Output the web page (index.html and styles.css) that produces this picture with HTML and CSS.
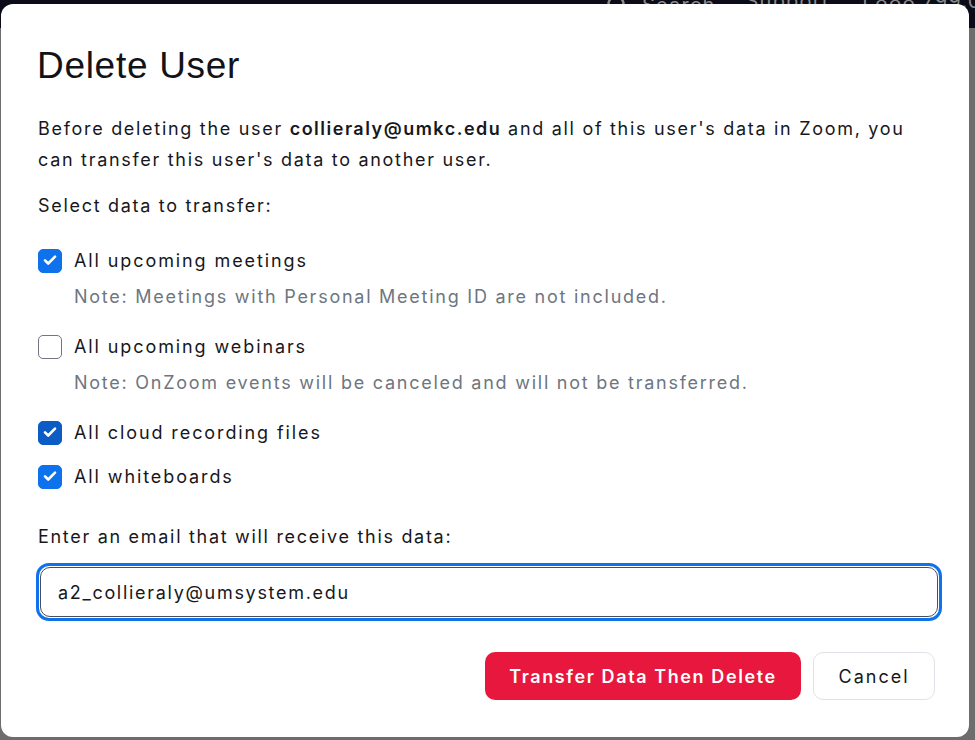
FILE: index.html
```html
<!DOCTYPE html>
<html lang="en">
<head>
<meta charset="utf-8">
<title>Delete User</title>
<link rel="stylesheet" href="styles.css">
</head>
<body>
<header class="topbar">
  <span class="top-item"><svg class="search-ic" width="22" height="22" viewBox="0 0 22 22"><circle cx="10" cy="10" r="7.5" fill="none" stroke="#8a8a8a" stroke-width="2.5"/><path d="M15.5 15.5l5 5" stroke="#8a8a8a" stroke-width="2.5"/></svg>Search</span>
  <span class="top-item">Support</span>
  <span class="top-item">1.888.799.0125</span>
</header>
<main class="page"></main>

<div class="modal" role="dialog" aria-labelledby="dlg-title">
  <h1 id="dlg-title" class="modal-title">Delete User</h1>
  <p class="intro">Before deleting the user <b>collieraly@umkc.edu</b> and all of this user's data in Zoom, you can transfer this user's data to another user.</p>
  <p class="label">Select data to transfer:</p>

  <div class="options">
    <div class="option">
      <label class="check-row"><span class="box checked"><svg viewBox="0 0 24 24" width="24" height="24"><path d="M7 12.3l3.2 3.2L17 8.7" fill="none" stroke="#fff" stroke-width="2.6" stroke-linecap="round" stroke-linejoin="round"/></svg></span>All upcoming meetings</label>
      <div class="note">Note: Meetings with Personal Meeting ID are not included.</div>
    </div>
    <div class="option">
      <label class="check-row"><span class="box"></span>All upcoming webinars</label>
      <div class="note">Note: OnZoom events will be canceled and will not be transferred.</div>
    </div>
    <div class="option tight">
      <label class="check-row"><span class="box checked dark"><svg viewBox="0 0 24 24" width="24" height="24"><path d="M7 12.3l3.2 3.2L17 8.7" fill="none" stroke="#fff" stroke-width="2.6" stroke-linecap="round" stroke-linejoin="round"/></svg></span>All cloud recording files</label>
    </div>
    <div class="option tight">
      <label class="check-row"><span class="box checked"><svg viewBox="0 0 24 24" width="24" height="24"><path d="M7 12.3l3.2 3.2L17 8.7" fill="none" stroke="#fff" stroke-width="2.6" stroke-linecap="round" stroke-linejoin="round"/></svg></span>All whiteboards</label>
    </div>
  </div>

  <p class="label email-label">Enter an email that will receive this data:</p>
  <div class="input-ring"><div class="input">a2_collieraly@umsystem.edu</div></div>

  <div class="actions">
    <button class="btn btn-danger">Transfer Data Then Delete</button>
    <button class="btn btn-cancel">Cancel</button>
  </div>
</div>
</body>
</html>
```

FILE: styles.css
```css
* { box-sizing: border-box; }
html, body { margin: 0; height: 100%; }
body {
  background: #6d6d6d;
  font-family: Inter, "Noto Sans", sans-serif;
  color: #232333;
  overflow: hidden;
}
.topbar {
  height: 28px;
  background: #0b0c18;
  display: flex;
  align-items: flex-start;
  padding-left: 606px;
  gap: 30px;
  color: #8a8a8a;
  font-size: 20px;
  letter-spacing: 1.2px;
  line-height: 14px;
  overflow: hidden;
  white-space: nowrap;
}
.top-item { display: flex; align-items: center; gap: 14px; flex: none; transform: translateY(-6px); }
.search-ic { flex: none; }
.page { height: calc(100% - 28px); }

.modal {
  position: fixed;
  left: 1px;
  top: 4px;
  width: 968px;
  height: 733px;
  background: #fff;
  border-radius: 12px;
  padding: 40px 32px 0 37px;
  color: #17171c;
  letter-spacing: 1.7px;
}
.modal-title {
  margin: 0 0 0 -1px;
  font-family: "Liberation Sans", Arial, sans-serif;
  font-weight: 400;
  font-size: 37px;
  line-height: 44px;
  letter-spacing: 0.7px;
  color: #121217;
}
.intro {
  margin: 25px 0 0;
  font-size: 18px;
  line-height: 31px;
  max-width: 890px;
}
.intro b { font-weight: 600; letter-spacing: 1.5px; }
.label {
  margin: 15px 0 0;
  font-size: 18px;
  line-height: 31px;
}
.options { margin-top: 24px; display: flex; flex-direction: column; }
.option { margin-bottom: 20px; }
.option.tight { margin-bottom: 13px; }
.check-row {
  display: flex;
  align-items: center;
  gap: 12px;
  font-size: 18px;
  line-height: 31px;
  letter-spacing: 1.9px;
}
.box {
  width: 24px;
  height: 24px;
  border: 1.5px solid #747487;
  border-radius: 5px;
  flex: none;
  display: flex;
}
.box.checked { background: #0e72ed; border-color: #0e72ed; }
.box.checked.dark { background: #0b5cc4; border-color: #0b5cc4; }
.box svg { margin: -1.5px; }
.note {
  margin-left: 36px;
  margin-top: 5px;
  margin-bottom: -1px;
  font-size: 18px;
  line-height: 31px;
  color: #6e7680;
  letter-spacing: 1.75px;
}
.email-label { margin-top: 16px; }
.input-ring {
  margin: 11px 0 0 -2px;
  width: 906px;
  height: 58px;
  border: 3px solid #0e72ed;
  border-radius: 13px;
  padding: 1px;
}
.input {
  height: 100%;
  border: 1px solid #4a4f57;
  border-radius: 10px;
  padding: 0 17px;
  display: flex;
  align-items: center;
  font-size: 18px;
  color: #17171c;
}
.actions {
  margin-top: 31px;
  display: flex;
  justify-content: flex-end;
  gap: 12px;
  padding-right: 2px;
}
.btn {
  height: 48px;
  border-radius: 10px;
  font-family: Inter, "Noto Sans", sans-serif;
  font-size: 18px;
  cursor: pointer;
}
.btn-danger {
  width: 316px;
  background: #e8173d;
  border: none;
  color: #fff;
  font-weight: 600;
  letter-spacing: 1.6px;
}
.btn-cancel {
  width: 122px;
  background: #fff;
  border: 1px solid #dfe3e8;
  color: #17171c;
  letter-spacing: 2px;
}
```
